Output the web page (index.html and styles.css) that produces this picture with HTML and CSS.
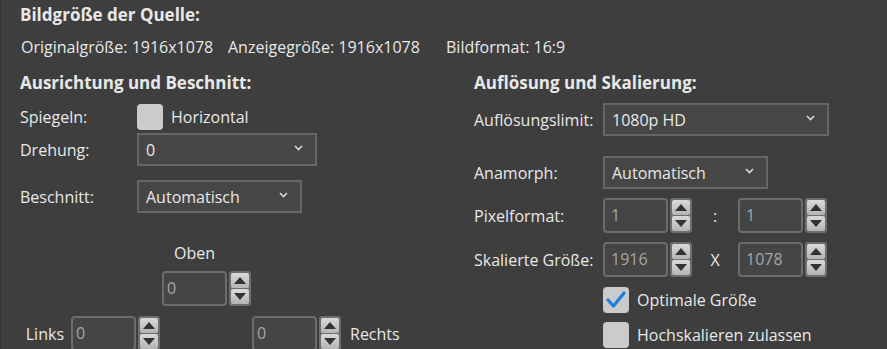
FILE: index.html
```html
<!DOCTYPE html>
<html lang="de">

<head>
    <meta charset="UTF-8" />
    <title>Bildgröße</title>
    <link rel="stylesheet" href="styles.css">
</head>

<body>
    <div class="panel">
        <!-- Quelle -->
        <div class="title top-title">Bildgröße der Quelle:</div>
        <div class="info">
            <span class="info-orig">Originalgröße: 1916x1078</span>
            <span class="info-disp">Anzeigegröße: 1916x1078</span>
            <span>Bildformat: 16:9</span>
        </div>

        <div class="columns">
            <!-- links: Ausrichtung -->
            <div class="col left">
                <div class="title">Ausrichtung und Beschnitt:</div>
                <div class="row row-mirror">
                    <span class="label">Spiegeln:</span>
                    <span class="check"></span>
                    <span class="check-text">Horizontal</span>
                </div>
                <div class="row row-rotate">
                    <span class="label">Drehung:</span>
                    <div class="select w-rotate">
                        <span>0</span>
                        <svg class="chev" width="9" height="6" viewBox="0 0 9 6"><path d="M1 1 L4.5 4.5 L8 1" fill="none" stroke="#d8d8d8" stroke-width="1.6"/></svg>
                    </div>
                </div>
                <div class="row row-crop">
                    <span class="label">Beschnitt:</span>
                    <div class="select w-crop">
                        <span>Automatisch</span>
                        <svg class="chev" width="9" height="6" viewBox="0 0 9 6"><path d="M1 1 L4.5 4.5 L8 1" fill="none" stroke="#d8d8d8" stroke-width="1.6"/></svg>
                    </div>
                </div>

                <div class="crop">
                    <div class="crop-top">
                        <span class="oben">Oben</span>
                        <div class="spin">
                            <div class="spin-input">0</div>
                            <div class="spin-btns">
                                <div class="spin-btn"><svg width="12" height="7" viewBox="0 0 12 7"><polygon points="0,7 12,7 6,0" fill="#333"/></svg></div>
                                <div class="spin-btn"><svg width="12" height="7" viewBox="0 0 12 7"><polygon points="0,0 12,0 6,7" fill="#333"/></svg></div>
                            </div>
                        </div>
                    </div>
                    <div class="crop-bottom">
                        <div class="side side-left">
                            <span class="side-label">Links</span>
                            <div class="spin">
                                <div class="spin-input">0</div>
                                <div class="spin-btns">
                                    <div class="spin-btn"><svg width="12" height="7" viewBox="0 0 12 7"><polygon points="0,7 12,7 6,0" fill="#333"/></svg></div>
                                    <div class="spin-btn"><svg width="12" height="7" viewBox="0 0 12 7"><polygon points="0,0 12,0 6,7" fill="#333"/></svg></div>
                                </div>
                            </div>
                        </div>
                        <div class="side side-right">
                            <div class="spin">
                                <div class="spin-input">0</div>
                                <div class="spin-btns">
                                    <div class="spin-btn"><svg width="12" height="7" viewBox="0 0 12 7"><polygon points="0,7 12,7 6,0" fill="#333"/></svg></div>
                                    <div class="spin-btn"><svg width="12" height="7" viewBox="0 0 12 7"><polygon points="0,0 12,0 6,7" fill="#333"/></svg></div>
                                </div>
                            </div>
                            <span class="side-label">Rechts</span>
                        </div>
                    </div>
                </div>
            </div>

            <!-- rechts: Auflösung -->
            <div class="col right">
                <div class="title">Auflösung und Skalierung:</div>
                <div class="row row-limit">
                    <span class="label">Auflösungslimit:</span>
                    <div class="select w-limit">
                        <span>1080p HD</span>
                        <svg class="chev" width="9" height="6" viewBox="0 0 9 6"><path d="M1 1 L4.5 4.5 L8 1" fill="none" stroke="#d8d8d8" stroke-width="1.6"/></svg>
                    </div>
                </div>
                <div class="row row-anamorph">
                    <span class="label">Anamorph:</span>
                    <div class="select w-anamorph">
                        <span>Automatisch</span>
                        <svg class="chev" width="9" height="6" viewBox="0 0 9 6"><path d="M1 1 L4.5 4.5 L8 1" fill="none" stroke="#d8d8d8" stroke-width="1.6"/></svg>
                    </div>
                </div>
                <div class="row row-pixel">
                    <span class="label">Pixelformat:</span>
                    <div class="spin">
                        <div class="spin-input">1</div>
                        <div class="spin-btns">
                            <div class="spin-btn"><svg width="12" height="7" viewBox="0 0 12 7"><polygon points="0,7 12,7 6,0" fill="#333"/></svg></div>
                            <div class="spin-btn"><svg width="12" height="7" viewBox="0 0 12 7"><polygon points="0,0 12,0 6,7" fill="#333"/></svg></div>
                        </div>
                    </div>
                    <span class="sep">:</span>
                    <div class="spin">
                        <div class="spin-input">1</div>
                        <div class="spin-btns">
                            <div class="spin-btn"><svg width="12" height="7" viewBox="0 0 12 7"><polygon points="0,7 12,7 6,0" fill="#333"/></svg></div>
                            <div class="spin-btn"><svg width="12" height="7" viewBox="0 0 12 7"><polygon points="0,0 12,0 6,7" fill="#333"/></svg></div>
                        </div>
                    </div>
                </div>
                <div class="row row-scaled">
                    <span class="label">Skalierte Größe:</span>
                    <div class="spin">
                        <div class="spin-input">1916</div>
                        <div class="spin-btns">
                            <div class="spin-btn"><svg width="12" height="7" viewBox="0 0 12 7"><polygon points="0,7 12,7 6,0" fill="#333"/></svg></div>
                            <div class="spin-btn"><svg width="12" height="7" viewBox="0 0 12 7"><polygon points="0,0 12,0 6,7" fill="#333"/></svg></div>
                        </div>
                    </div>
                    <span class="sep">X</span>
                    <div class="spin">
                        <div class="spin-input">1078</div>
                        <div class="spin-btns">
                            <div class="spin-btn"><svg width="12" height="7" viewBox="0 0 12 7"><polygon points="0,7 12,7 6,0" fill="#333"/></svg></div>
                            <div class="spin-btn"><svg width="12" height="7" viewBox="0 0 12 7"><polygon points="0,0 12,0 6,7" fill="#333"/></svg></div>
                        </div>
                    </div>
                </div>
                <div class="row row-optimal">
                    <span class="label"></span>
                    <span class="check checked">
                        <svg width="20" height="18" viewBox="0 0 20 18"><path d="M2 9 L7.5 15 L18 2" fill="none" stroke="#1b7fdc" stroke-width="3.2" stroke-linecap="round" stroke-linejoin="round"/></svg>
                    </span>
                    <span class="check-text">Optimale Größe</span>
                </div>
                <div class="row row-upscale">
                    <span class="label"></span>
                    <span class="check"></span>
                    <span class="check-text">Hochskalieren zulassen</span>
                </div>
            </div>
        </div>
    </div>
</body>

</html>
```

FILE: styles.css
```css
body {
    margin: 0;
    padding: 0;
    background-color: #3e3e3e;
    font-family: "Open Sans", "Noto Sans", sans-serif;
    font-size: 16px;
    color: #e8e8e8;
    overflow: hidden;
}

.panel {
    height: 349px;
    padding: 2px 0 0 19px;
    box-sizing: border-box;
    border-left: 1px solid #363636;
}

.title {
    height: 26px;
    line-height: 26px;
    font-size: 17px;
    font-weight: bold;
    white-space: nowrap;
}

.info {
    display: flex;
    height: 24px;
    line-height: 24px;
    margin-top: 7px;
    padding-left: 1px;
    white-space: nowrap;
}

.info-orig {
    width: 207px;
}

.info-disp {
    width: 218px;
}

.columns {
    display: grid;
    grid-template-columns: 454px 1fr;
    margin-top: 11px;
}

.row {
    display: flex;
    align-items: center;
    white-space: nowrap;
}

.left .label {
    width: 117px;
    flex-shrink: 0;
}

.right .label {
    width: 129px;
    flex-shrink: 0;
}

.row-mirror {
    height: 27px;
    margin-top: 7px;
}

.row-rotate {
    height: 33px;
    margin-top: 3px;
}

.row-crop {
    height: 33px;
    margin-top: 14px;
}

.row-limit {
    height: 33px;
    margin-top: 7px;
}

.row-anamorph {
    height: 33px;
    margin-top: 20px;
}

.row-pixel {
    height: 35px;
    margin-top: 9px;
}

.row-scaled {
    height: 35px;
    margin-top: 9px;
}

.row-optimal {
    height: 26px;
    margin-top: 10px;
}

.row-upscale {
    height: 26px;
    margin-top: 9px;
}

/* checkbox */
.check {
    display: flex;
    align-items: center;
    justify-content: center;
    width: 26px;
    height: 26px;
    border-radius: 4px;
    background-color: #cbcbcb;
    flex-shrink: 0;
}

.check-text {
    margin-left: 8px;
}

/* dropdown */
.select {
    display: flex;
    align-items: center;
    justify-content: space-between;
    height: 33px;
    padding: 0 12px 0 7px;
    box-sizing: border-box;
    border: 2px solid #666;
    background-color: #464646;
}

.select .chev {
    margin-top: -4px;
}

.w-rotate {
    width: 180px;
}

.w-crop {
    width: 165px;
}

.w-limit {
    width: 226px;
}

.w-anamorph {
    width: 165px;
}

/* spinbox */
.spin {
    display: flex;
    height: 35px;
}

.spin-input {
    width: 65px;
    height: 35px;
    padding-left: 6px;
    box-sizing: border-box;
    border: 2px solid #6c6c6c;
    border-radius: 4px;
    background-color: #454545;
    color: #a6a6a6;
    line-height: 31px;
}

.crop .spin-input {
    padding-left: 3px;
}

.spin-btns {
    display: flex;
    flex-direction: column;
    width: 22px;
    margin-left: 2px;
    padding: 2px;
    gap: 1px;
    box-sizing: border-box;
    border-radius: 3px;
    background-color: #6e6e6e;
}

.spin-btn {
    flex: 1;
    display: flex;
    align-items: center;
    justify-content: center;
    border-radius: 2px;
    background: linear-gradient(#dadada, #b4b4b4);
}

.sep {
    width: 46px;
    text-align: center;
}

/* crop area */
.crop {
    margin-top: 30px;
}

.crop-top {
    display: flex;
    flex-direction: column;
    align-items: flex-start;
    margin-left: 142px;
}

.oben {
    width: 65px;
    height: 20px;
    line-height: 20px;
    text-align: center;
}

.crop-top .spin {
    margin-top: 8px;
}

.crop-bottom {
    display: grid;
    grid-template-columns: 140px 1fr;
    column-gap: 92px;
    margin-top: 10px;
}

.side {
    display: flex;
    align-items: center;
}

.side-left {
    justify-content: flex-end;
}

.side-left .side-label {
    margin-right: 7px;
}

.side-right .side-label {
    margin-left: 9px;
}
```
